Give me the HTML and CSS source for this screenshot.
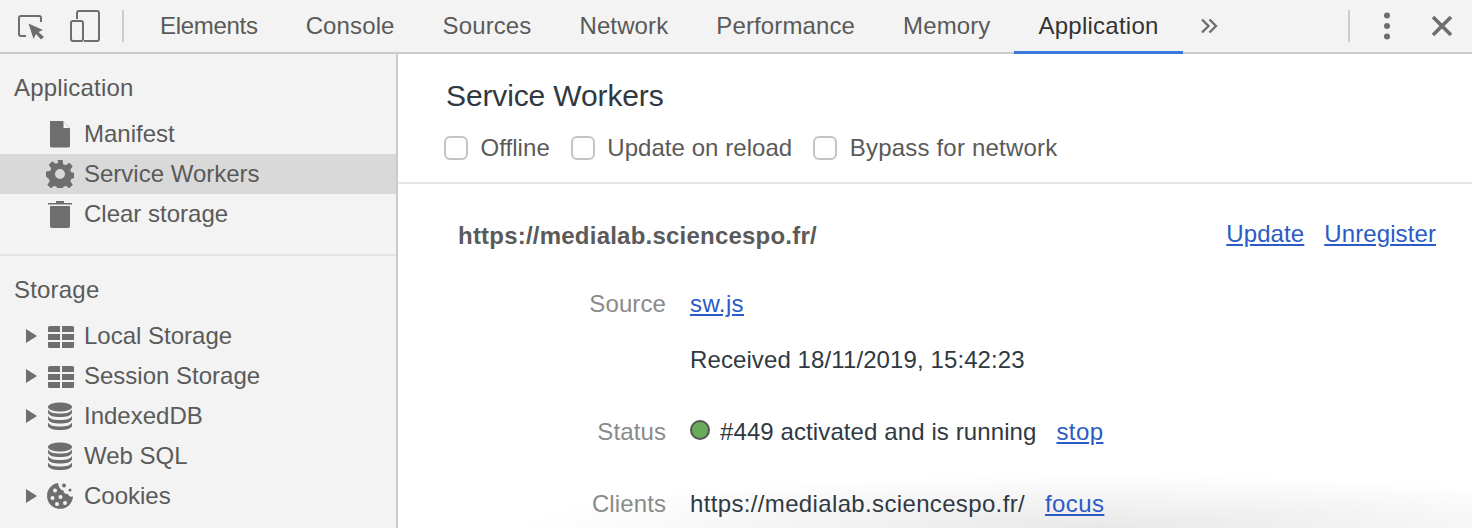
FILE: index.html
```html
<!DOCTYPE html>
<html lang="en">
<head>
  <meta charset="UTF-8">
  <title>DevTools - Service Workers</title>
  <link rel="stylesheet" href="styles.css">
</head>
<body>
  <!-- Toolbar -->
  <header class="toolbar">
    <div class="tool-icons">
      <svg class="icon-inspect" width="32" height="32" viewBox="0 0 32 32">
        <path d="M10 26H5a2 2 0 0 1-2-2V8a2 2 0 0 1 2-2h18a2 2 0 0 1 2 2v4" fill="none" stroke="#6e6e6e" stroke-width="2"/>
        <path d="M12.500 13.500L27 20l-4.500 2 5.500 5-3 2.500-5-5.500-2.500 5z" fill="#6e6e6e"/>
      </svg>
      <svg class="icon-device" width="32" height="34" viewBox="0 0 32 34">
        <path d="M7 10V4a2 2 0 0 1 2-2h18a2 2 0 0 1 2 2v26a2 2 0 0 1-2 2H14" fill="none" stroke="#6e6e6e" stroke-width="2"/>
        <rect x="1" y="12" width="12" height="20" rx="2" fill="none" stroke="#6e6e6e" stroke-width="2"/>
      </svg>
    </div>
    <span class="tool-sep"></span>
    <nav class="tabs">
      <a class="tab">Elements</a>
      <a class="tab">Console</a>
      <a class="tab">Sources</a>
      <a class="tab">Network</a>
      <a class="tab">Performance</a>
      <a class="tab">Memory</a>
      <a class="tab active">Application</a>
    </nav>
    <svg class="icon-more-tabs" width="18" height="16" viewBox="0 0 18 16">
      <path d="M2 1.500l6.500 6.500L2 14.500M9.500 1.500L16 8l-6.500 6.500" fill="none" stroke="#6e6e6e" stroke-width="2.400"/>
    </svg>
    <span class="toolbar-space"></span>
    <span class="tool-sep"></span>
    <svg class="icon-dots" width="10" height="28" viewBox="0 0 10 28">
      <circle cx="5" cy="3.500" r="3" fill="#6e6e6e"/>
      <circle cx="5" cy="14" r="3" fill="#6e6e6e"/>
      <circle cx="5" cy="24.500" r="3" fill="#6e6e6e"/>
    </svg>
    <svg class="icon-close" width="22" height="22" viewBox="0 0 22 22">
      <path d="M2 2l18 18M20 2L2 20" fill="none" stroke="#6e6e6e" stroke-width="3.600"/>
    </svg>
  </header>

  <div class="panel">
    <!-- Sidebar -->
    <aside class="sidebar">
      <section class="side-group">
        <h2 class="side-title">Application</h2>
        <div class="side-row">
          <span class="arrow-slot"></span>
          <svg class="side-icon" width="28" height="28" viewBox="0 0 28 28">
            <path d="M4 1h13l7 7.500V26a1.500 1.500 0 0 1-1.500 1.500h-17A1.500 1.500 0 0 1 4 26z" fill="#6e6e6e"/>
            <path d="M17.500 1.500l6 6.500h-6z" fill="#f3f3f3"/>
          </svg>
          Manifest
        </div>
        <div class="side-row selected">
          <span class="arrow-slot"></span>
          <svg class="side-icon" width="28" height="28" viewBox="0 0 28 28">
            <path fill-rule="evenodd" fill="#6e6e6e" d="M11.500 0h5l.7 4.200 2.600 1.100 3.500-2.500 3.500 3.500-2.500 3.500 1.100 2.600 4.100.6v5l-4.100.7-1.100 2.600 2.500 3.500-3.500 3.500-3.500-2.500-2.600 1.100-.7 4.100h-5l-.6-4.100-2.600-1.100-3.500 2.500-3.500-3.500 2.500-3.500-1.100-2.600L0 16.500v-5l4.100-.6 1.100-2.600L2.700 4.800l3.500-3.500 3.500 2.500 2.600-1.100zM14 9a5 5 0 1 0 0 10 5 5 0 0 0 0-10z"/>
          </svg>
          Service Workers
        </div>
        <div class="side-row">
          <span class="arrow-slot"></span>
          <svg class="side-icon" width="28" height="28" viewBox="0 0 28 28">
            <path d="M2 3h8V1h8v2h8v1.500H2zM4 6h20v20a2 2 0 0 1-2 2H6a2 2 0 0 1-2-2z" fill="#6e6e6e"/>
          </svg>
          Clear storage
        </div>
      </section>
      <section class="side-group">
        <h2 class="side-title">Storage</h2>
        <div class="side-row">
          <span class="arrow-slot"><span class="arrow"></span></span>
          <svg class="side-icon" width="28" height="28" viewBox="0 0 28 28">
            <use href="#grid-icon"/>
          </svg>
          Local Storage
        </div>
        <div class="side-row">
          <span class="arrow-slot"><span class="arrow"></span></span>
          <svg class="side-icon" width="28" height="28" viewBox="0 0 28 28">
            <use href="#grid-icon"/>
          </svg>
          Session Storage
        </div>
        <div class="side-row">
          <span class="arrow-slot"><span class="arrow"></span></span>
          <svg class="side-icon" width="28" height="28" viewBox="0 0 28 28">
            <use href="#db-icon"/>
          </svg>
          IndexedDB
        </div>
        <div class="side-row">
          <span class="arrow-slot"></span>
          <svg class="side-icon" width="28" height="28" viewBox="0 0 28 28">
            <use href="#db-icon"/>
          </svg>
          Web SQL
        </div>
        <div class="side-row">
          <span class="arrow-slot"><span class="arrow"></span></span>
          <svg class="side-icon" width="28" height="28" viewBox="0 0 28 28">
            <path fill-rule="evenodd" fill="#6e6e6e" d="M12 1a13 13 0 1 0 15 13.500c-2.500.5-4.500-.5-5-2.500-2.500.5-4.500-1-4.500-3.500C15 8.500 12.500 5 12 1zM9 6.500a2 2 0 1 1 0 4 2 2 0 0 1 0-4zM6.500 14a2 2 0 1 1 0 4 2 2 0 0 1 0-4zM14.500 13a2 2 0 1 1 0 4 2 2 0 0 1 0-4zM11 20a2 2 0 1 1 0 4 2 2 0 0 1 0-4zM19 19a2 2 0 1 1 0 4 2 2 0 0 1 0-4z"/>
            <circle cx="18" cy="3.500" r="2" fill="#6e6e6e"/>
            <circle cx="24" cy="8" r="1.500" fill="#6e6e6e"/>
          </svg>
          Cookies
        </div>
      </section>
    </aside>

    <!-- Main content -->
    <main class="content">
      <div class="sw-head">
        <h1 class="sw-title">Service Workers</h1>
        <div class="sw-options">
          <label class="option"><span class="check"></span>Offline</label>
          <label class="option"><span class="check"></span>Update on reload</label>
          <label class="option"><span class="check"></span>Bypass for network</label>
        </div>
      </div>
      <div class="sw-body">
        <div class="origin-row">
          <span class="origin">https://medialab.sciencespo.fr/</span>
          <span class="origin-links">
            <a class="link">Update</a>
            <a class="link">Unregister</a>
          </span>
        </div>
        <div class="info-grid">
          <span class="info-label">Source</span>
          <span class="info-value"><a class="link">sw.js</a></span>
          <span class="info-label"></span>
          <span class="info-value received">Received 18/11/2019, 15:42:23</span>
          <span class="info-label">Status</span>
          <span class="info-value status"><span class="dot"></span>#449 activated and is running<a class="link after">stop</a></span>
          <span class="info-label">Clients</span>
          <span class="info-value"><span class="client-url">https://medialab.sciencespo.fr/</span><a class="link after">focus</a></span>
        </div>
      </div>
    </main>
  </div>

  <!-- Shared icons -->
  <svg class="icon-defs" width="0" height="0">
    <defs>
      <g id="grid-icon" fill="#6e6e6e">
        <path d="M2 5.500A1.500 1.500 0 0 1 3.500 4H14v6H2zM16 4h10.500A1.500 1.500 0 0 1 28 5.500V10H16zM2 12h12v6H2zM16 12h12v6H16zM2 20h12v6H3.500A1.500 1.500 0 0 1 2 24.500zM16 20h12v4.500a1.500 1.500 0 0 1-1.500 1.500H16z"/>
      </g>
      <g id="db-icon" fill="#6e6e6e">
        <ellipse cx="14" cy="5" rx="12" ry="4.500"/>
        <path d="M2 7.500c2 3 5 4 12 4s10-1 12-4V11c-2 3-5 4-12 4S4 14 2 11z"/>
        <path d="M2 14c2 3 5 4 12 4s10-1 12-4v3.500c-2 3-5 4-12 4s-10-1-12-4z"/>
        <path d="M2 20.500c2 3 5 4 12 4s10-1 12-4V24c-1 2.500-5 4-12 4S3 26.500 2 24z"/>
      </g>
    </defs>
  </svg>
</body>
</html>
```

FILE: styles.css
```css
* {
  box-sizing: border-box;
}

html, body {
  height: 100%;
}

body {
  margin: 0;
  overflow: hidden;
  background-color: #fff;
  color: #5a5a5a;
  font-family: "Liberation Sans", Arial, sans-serif;
  font-size: 24px;
}

/* Toolbar */
.toolbar {
  display: flex;
  align-items: center;
  height: 54px;
  background-color: #f3f3f3;
  border-bottom: 2px solid #cbcbcb;
}
.tool-icons {
  display: flex;
  align-items: center;
  gap: 22px;
  width: 122px;
  padding-left: 16px;
}
.tool-sep {
  width: 2px;
  height: 32px;
  background-color: #cbcbcb;
}
.tabs {
  display: flex;
  align-items: stretch;
  align-self: stretch;
  margin-left: 12px;
  margin-bottom: -2px;
}
.tab {
  display: flex;
  align-items: center;
  padding: 0 24px;
  border-bottom: 3px solid transparent;
  color: #5a5a5a;
  letter-spacing: 0.12px;
}
.tab:first-child {
  letter-spacing: -0.3px;
}
.tab.active {
  color: #333;
  border-bottom-color: #3b78dc;
  letter-spacing: 0.25px;
}
.icon-more-tabs {
  margin-left: 17px;
}
.toolbar-space {
  flex: 1;
}
.icon-dots {
  margin-left: 32px;
}
.icon-close {
  margin-left: 39px;
  margin-right: 19px;
}

/* Panel */
.panel {
  display: flex;
  height: 474px;
}

/* Sidebar */
.sidebar {
  flex: none;
  width: 398px;
  background-color: #f3f3f3;
  border-right: 2px solid #cbcbcb;
}
.side-group {
  padding-bottom: 20px;
}
.side-group + .side-group {
  border-top: 2px solid #e4e4e4;
}
.side-title {
  display: flex;
  align-items: center;
  height: 60px;
  margin: 0;
  padding-left: 14px;
  padding-top: 8px;
  font-size: 24px;
  font-weight: normal;
  letter-spacing: 0.2px;
  color: #5a5a5a;
}
.side-row {
  display: flex;
  align-items: center;
  height: 40px;
  white-space: nowrap;
}
.side-row.selected {
  background-color: #d9d9d9;
}
.arrow-slot {
  display: flex;
  align-items: center;
  flex: none;
  width: 46px;
  padding-left: 26px;
}
.arrow {
  width: 0;
  height: 0;
  border-left: 11px solid #6e6e6e;
  border-top: 7px solid transparent;
  border-bottom: 7px solid transparent;
}
.side-icon {
  flex: none;
  margin-right: 10px;
}
.icon-defs {
  position: absolute;
}

/* Content */
.content {
  flex: 1;
  background: radial-gradient(ellipse 580px 54px at 702px 100%, #e8e8e8, #fff);
}
.sw-head {
  height: 130px;
  padding: 22px 0 0 48px;
  border-bottom: 2px solid #e6e6e6;
}
.sw-title {
  margin: 0;
  font-size: 30px;
  line-height: 40px;
  font-weight: normal;
  color: #303942;
  letter-spacing: -0.13px;
}
.sw-options {
  display: flex;
  gap: 21px;
  margin-top: 16px;
  margin-left: -2px;
  letter-spacing: 0.05px;
}
.option {
  display: flex;
  align-items: center;
  gap: 12.5px;
  height: 32px;
}
.option:last-child {
  letter-spacing: 0.2px;
}
.check {
  width: 24px;
  height: 24px;
  background-color: #fff;
  border: 2px solid #c4c4c4;
  border-radius: 6px;
}
.sw-body {
  padding: 32px 36px 0 60px;
}
.origin-row {
  display: flex;
  justify-content: space-between;
  align-items: center;
  height: 40px;
}
.origin {
  font-weight: bold;
  color: #5a5a5a;
  letter-spacing: 0.22px;
}
.origin-links {
  display: flex;
  gap: 20px;
  margin-top: -4px;
  letter-spacing: 0.1px;
}
.link {
  color: #2a5bc6;
  text-decoration: underline;
}
.info-grid {
  display: grid;
  grid-template-columns: 208px 1fr;
  column-gap: 24px;
  margin-top: 32px;
  letter-spacing: 0.1px;
}
.info-grid .link {
  letter-spacing: 0.4px;
}
.info-label {
  height: 56px;
  text-align: right;
  color: #8a8a8a;
  line-height: 32px;
}
.info-value {
  height: 56px;
  color: #303942;
  line-height: 32px;
  white-space: nowrap;
}
.client-url {
  letter-spacing: 0.35px;
}
.received {
  height: 72px;
}
.status {
  height: 72px;
  display: flex;
  align-items: flex-start;
}
.dot {
  flex: none;
  width: 20px;
  height: 20px;
  margin: 4px 10px 0 0;
  background-color: #67ac5b;
  border: 2px solid #555;
  border-radius: 50%;
}
.after {
  margin-left: 20px;
}
```
